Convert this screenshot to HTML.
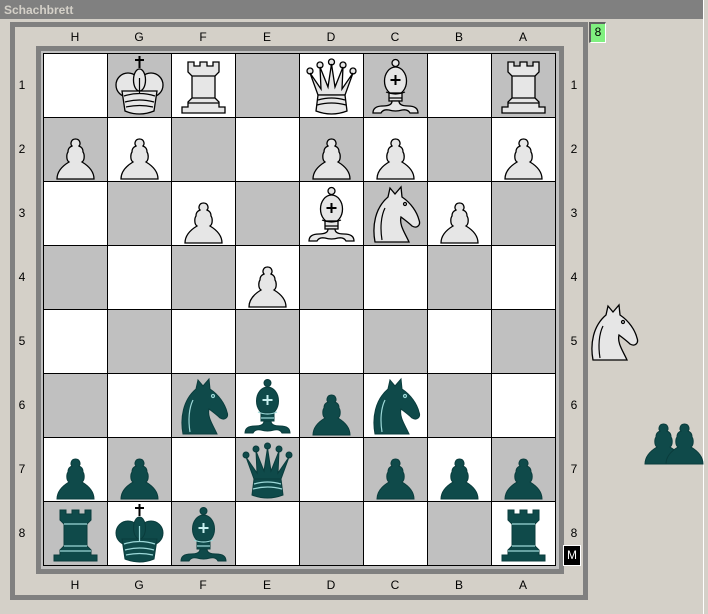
<!DOCTYPE html>
<html><head><meta charset="utf-8"><style>
*{margin:0;padding:0;box-sizing:border-box}
body{width:708px;height:614px;background:#d4d0c8;position:relative;overflow:hidden;font-family:"Liberation Sans",sans-serif;font-size:12px;color:#000}
.a{position:absolute}
#title{left:0;top:0;width:704px;height:19px;background:#808080;color:#d4d0c8;font-weight:bold;font-size:12px;padding:3px 0 0 4px}
#outer{left:10px;top:22px;width:578px;height:578px;border:5px solid #808080}
#inner{left:36px;top:46px;width:528px;height:528px;border:5px solid #808080;background:#c0c0c0}
#board{left:43px;top:53px;width:513px;height:513px;background:#000}
.sq{position:absolute;width:63px;height:63px}
.w{background:#fff}.g{background:#c0c0c0}
svg{position:absolute;left:0;top:0}
.pw{fill:#e6e6e6;stroke:#000;stroke-width:1.3}
.pw .ln{fill:none;stroke:#000;stroke-width:1.2}
.pb{fill:#0f4a4a;stroke:#0a3c3c;stroke-width:1}
.pb .ln{fill:none;stroke:#9cd8d8;stroke-width:1.2}
.cr{fill:none;stroke-width:2}
.pw .cr{stroke:#000}.pb .cr{stroke:#c8f0f0}
.kc{fill:none;stroke:#000!important;stroke-width:2}
.lb{position:absolute;width:20px;text-align:center;font-size:12px}
</style></head><body>
<div class="a" id="title">Schachbrett</div>
<div class="a" style="left:703px;top:0;width:1px;height:614px;background:#fff"></div>
<div class="a" id="outer"></div>
<div class="a" id="inner"></div>
<div class="a" id="board"></div>
<div id="sqs"></div>
<div class="a" style="left:589px;top:22px;width:17px;height:21px;background:#80f080;border-left:2px solid #606060;border-top:2px solid #606060;border-right:1px solid #fff;border-bottom:1px solid #fff;text-align:center;line-height:17px">8</div>
<div class="a" style="left:563px;top:545px;width:18px;height:21px;background:#000;color:#fff;border:1px solid #fff;text-align:center;line-height:19px">M</div>
<div class="a" id="sk" style="left:582px;top:300px;width:63px;height:63px"></div>
<div class="a" id="sp1" style="left:632px;top:403px;width:63px;height:63px"></div>
<div class="a" id="sp2" style="left:653px;top:403px;width:63px;height:63px"></div>
<script>
var S={
P:'<path d="M13 61 C13 52 20 47 25 44 C22 42 22.5 36 24 34 C24 30 26 29 28 28 C26 26 27 21 31.5 21 C36 21 37 26 35 28 C37 29 39 30 39 34 C40.5 36 41 42 38 44 C43 47 50 52 50 61 Z"/>',
R:'<path d="M16 8 h6 v4 h6 v-4 h7 v4 h6 v-4 h6 v10 l-4 4 v22 l4 4 v5 h6 v6 H10 v-6 h6 v-5 l4 -4 V22 l-4 -4 Z"/><path class="ln" d="M20 22 H43 M20 44 H43 M16 49 H47"/>',
K:'<path class="kc" d="M31.5 2 V14 M27 6 H36"/><circle cx="20" cy="31" r="12"/><circle cx="43" cy="31" r="12"/><ellipse cx="31.5" cy="26" rx="6" ry="11"/><path d="M14 37 H49 L46 57 Q31.5 63 17 57 Z"/><path class="ln" d="M31.5 24 V40 M16 42 Q31.5 37 47 42 M17 48 Q31.5 44 46 48 M18 53 Q31.5 50 45 53"/>',
Q:'<circle cx="10" cy="17" r="3"/><circle cx="20" cy="11" r="3"/><circle cx="31.5" cy="8" r="3"/><circle cx="43" cy="11" r="3"/><circle cx="53" cy="17" r="3"/><path d="M10 19 L18 41 H45 L53 19 L42 35 L43 13 L35 33 L31.5 10 L28 33 L20 13 L21 35 Z"/><path d="M18 41 H45 L47 57 Q31.5 63 16 57 Z"/><path class="ln" d="M18 46 Q31.5 42 45 46 M17 51 Q31.5 47 46 51"/>',
B:'<circle cx="31.5" cy="9" r="3.5"/><ellipse cx="31.5" cy="27" rx="11" ry="14"/><rect x="25" y="39" width="13" height="8"/><path d="M9 59 Q9 52 19 52 Q28 52 28 47 H35 Q35 52 44 52 Q54 52 54 59 H46 Q44 55 38 56 Q31.5 58 25 56 Q19 55 17 59 Z"/><path class="cr" d="M31.5 21 V31 M26.5 26 H36.5"/><path class="ln" d="M22 38 Q31.5 42 41 38 M25 44 H38"/>',
N:'<path d="M11 60 C8 44 11 26 24 15 L26 6 L31 12 L37 5 L38 15 C47 21 53 30 55 38 C57 43 53 47 48 44 C45 41 41 38 37 35 C35 43 41 51 45 60 Z"/><path class="ln" d="M21 26 C17 34 16 46 18 58"/><circle class="ln" cx="41" cy="22" r="1.5"/>'};
function pc(k){return '<svg width="63" height="63" viewBox="0 0 63 63"><g class="'+(k[0]=="w"?"pw":"pb")+'">'+S[k[1]]+'</g></svg>';}
var cols="HGFEDCBA";
var P={
"0,1":"wK","0,2":"wR","0,4":"wQ","0,5":"wB","0,7":"wR",
"1,0":"wP","1,1":"wP","1,4":"wP","1,5":"wP","1,7":"wP",
"2,2":"wP","2,4":"wB","2,5":"wN","2,6":"wP",
"3,3":"wP",
"5,2":"bN","5,3":"bB","5,4":"bP","5,5":"bN",
"6,0":"bP","6,1":"bP","6,3":"bQ","6,5":"bP","6,6":"bP","6,7":"bP",
"7,0":"bR","7,1":"bK","7,2":"bB","7,7":"bR"};
var h="";
for(var r=0;r<8;r++)for(var c=0;c<8;c++){
var k=P[r+","+c];
h+='<div class="sq '+((r+c)%2?"g":"w")+'" style="left:'+(44+64*c)+'px;top:'+(54+64*r)+'px">'+(k?pc(k):"")+'</div>';}
for(var c=0;c<8;c++){h+='<div class="lb" style="left:'+(65+64*c)+'px;top:30px">'+cols[c]+'</div>';h+='<div class="lb" style="left:'+(65+64*c)+'px;top:578px">'+cols[c]+'</div>';}
for(var r=0;r<8;r++){h+='<div class="lb" style="left:12px;top:'+(78+64*r)+'px">'+(r+1)+'</div>';h+='<div class="lb" style="left:564px;top:'+(78+64*r)+'px">'+(r+1)+'</div>';}
document.getElementById("sqs").innerHTML=h;
document.getElementById("sk").innerHTML=pc("wN");
document.getElementById("sp1").innerHTML=pc("bP");
document.getElementById("sp2").innerHTML=pc("bP");
</script>
</body></html>
